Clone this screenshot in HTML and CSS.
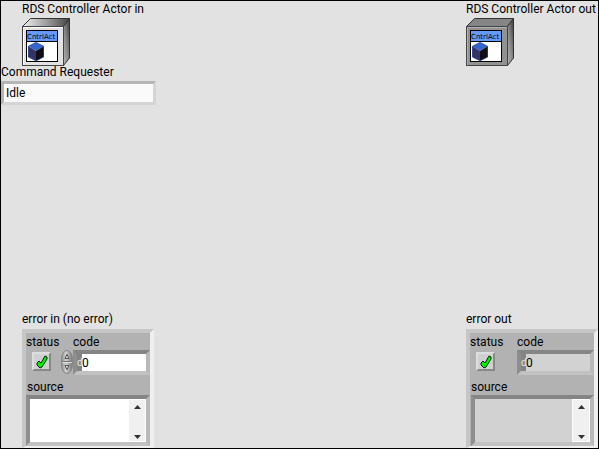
FILE: index.html
```html
<!DOCTYPE html>
<html lang="en">
<head>
<meta charset="utf-8">
<title>RDS Controller Actor</title>
<link rel="stylesheet" href="styles.css">
</head>
<body>
<svg class="defs" aria-hidden="true">
  <defs>
    <linearGradient id="side" x1="1" y1="0" x2="0" y2="1">
      <stop offset="0" stop-color="#383838"/>
      <stop offset="0.5" stop-color="#858585"/>
      <stop offset="1" stop-color="#b8b8b8"/>
    </linearGradient>
    <linearGradient id="top" x1="0" y1="0" x2="1" y2="0">
      <stop offset="0" stop-color="#eeeeee"/>
      <stop offset="0.5" stop-color="#a0a0a0"/>
      <stop offset="1" stop-color="#444444"/>
    </linearGradient>
    <linearGradient id="knob" x1="0" y1="0" x2="1" y2="0">
      <stop offset="0" stop-color="#8c8c8c"/>
      <stop offset="0.4" stop-color="#d2d2d2"/>
      <stop offset="1" stop-color="#777777"/>
    </linearGradient>
    <symbol id="face" viewBox="0 0 32 33">
      <rect x="0.5" y="0.5" width="31" height="31" fill="#fff" stroke="#000"/>
      <rect x="1" y="1" width="30" height="10" fill="#6699ff"/>
      <path d="M1 11.5H31" stroke="#000"/>
      <text x="1" y="9" class="face-text">CntrlAct</text>
      <path d="M2 16L10 12L18 16L10 21Z" fill="#3366cc"/>
      <path d="M2 16L10 21V31L2 27Z" fill="#333366"/>
      <path d="M10 21L18 16V27L10 31Z" fill="#101014"/>
      <path d="M2.5 27V16.5L10 12.5L17.5 16.5V27L10 31Z" fill="none" stroke="#3355aa" stroke-opacity="0.6"/>
    </symbol>
    <symbol id="check" viewBox="0 0 12 14">
      <path d="M1 8L3 6L5 8L9 1L11 2V4L6 12L4 13L1 10Z" fill="#00f000" stroke="#002800"/>
    </symbol>
  </defs>
</svg>
<main class="panel">
  <section class="side">
    <div class="inputs">
      <h2 class="caption indent">RDS Controller Actor in</h2>
      <svg class="actor indent" viewBox="0 0 48 48" role="img" aria-label="CntrlAct">
        <path d="M0.5 8.5L8.5 0.5H47.5L41.5 8.5Z" fill="url(#top)" stroke="#333"/>
        <path d="M41.5 8.5L47.5 0.5V40L41.5 47.5Z" fill="url(#side)" stroke="#333"/>
        <rect x="0.5" y="8.5" width="41" height="39" fill="#e2e2e2" stroke="#444"/>
        <path d="M1.5 47V9.5H41" fill="none" stroke="#fff"/>
        <use href="#face" x="4" y="12" width="32" height="33"/>
      </svg>
      <label class="caption" for="command">Command Requester</label>
      <input class="command" id="command" value="Idle">
    </div>
    <section class="error indent">
      <h2 class="caption">error in (no error)</h2>
      <div class="cluster">
        <div class="row">
          <div class="status">
            <label for="status-in">status</label>
            <span class="led"><input type="checkbox" id="status-in" checked><svg><use href="#check"/></svg></span>
          </div>
          <div class="code">
            <label for="code-in">code</label>
            <div class="number">
              <span class="spinner">
                <svg viewBox="0 0 12 24" aria-hidden="true">
                  <rect x="0.5" y="0.5" width="11" height="23" rx="5.5" ry="9" fill="url(#knob)" stroke="#858585"/>
                  <path d="M1 11.5H11" stroke="#777"/><path d="M1 12.5H11" stroke="#ddd"/>
                  <path d="M4 8.5L6 4.5L8 8.5Z" fill="#ddd" stroke="#555"/>
                  <path d="M4 15.5L6 19.5L8 15.5Z" fill="#ddd" stroke="#555"/>
                </svg>
                <button aria-label="Increase"></button><button aria-label="Decrease"></button>
              </span>
              <span class="frame"><span class="radix">d</span><input id="code-in" value="0"></span>
            </div>
          </div>
        </div>
        <label class="source-label" for="source-in">source</label>
        <div class="frame source">
          <textarea id="source-in"></textarea>
          <div class="scroll">
            <button aria-label="Scroll up"><svg viewBox="0 0 7 4"><path d="M0 4L3.5 0L7 4Z"/></svg></button>
            <button aria-label="Scroll down"><svg viewBox="0 0 7 4"><path d="M0 0L3.5 4L7 0Z"/></svg></button>
          </div>
        </div>
      </div>
    </section>
  </section>
  <section class="side output">
    <div class="inputs">
      <h2 class="caption">RDS Controller Actor out</h2>
      <svg class="actor" viewBox="0 0 48 48" role="img" aria-label="CntrlAct">
        <path d="M0.5 8.5L8.5 0.5H47.5L41.5 8.5Z" fill="#858585" stroke="#333"/>
        <path d="M41.5 8.5L47.5 0.5V40L41.5 47.5Z" fill="url(#side)" stroke="#333"/>
        <rect x="0.5" y="8.5" width="41" height="39" fill="#929292" stroke="#444"/>
        <path d="M1.5 47V9.5H41" fill="none" stroke="#b0b0b0"/>
        <use href="#face" x="4" y="12" width="32" height="33"/>
      </svg>
    </div>
    <section class="error">
      <h2 class="caption">error out</h2>
      <div class="cluster">
        <div class="row">
          <div class="status">
            <label for="status-out">status</label>
            <span class="led"><input type="checkbox" id="status-out" checked disabled><svg><use href="#check"/></svg></span>
          </div>
          <div class="code">
            <label for="code-out">code</label>
            <div class="number">
              <span class="frame"><span class="radix">d</span><input id="code-out" value="0" readonly></span>
            </div>
          </div>
        </div>
        <label class="source-label" for="source-out">source</label>
        <div class="frame source">
          <textarea id="source-out" readonly></textarea>
          <div class="scroll">
            <button aria-label="Scroll up"><svg viewBox="0 0 7 4"><path d="M0 4L3.5 0L7 4Z"/></svg></button>
            <button aria-label="Scroll down"><svg viewBox="0 0 7 4"><path d="M0 0L3.5 4L7 0Z"/></svg></button>
          </div>
        </div>
      </div>
    </section>
  </section>
</main>
</body>
</html>
```
FILE: styles.css
```css
* {
  box-sizing: border-box;
}

body {
  margin: 0;
  background: #e2e2e2;
  color: #000;
  font: 12px/16px Roboto, "Open Sans", sans-serif;
}

input,
textarea,
button {
  margin: 0;
  padding: 0;
  border: 0;
  border-radius: 0;
  color: inherit;
  font: inherit;
}

.defs {
  position: absolute;
  width: 0;
  height: 0;
}

.face-text {
  font: 7px "DejaVu Sans", sans-serif;
}

.panel {
  display: flex;
  justify-content: space-between;
  min-height: 100vh;
  border: 1px solid #000;
}

.side {
  display: flex;
  flex-direction: column;
  justify-content: space-between;
  width: 155px;
}

.output {
  width: 132px;
}

.indent {
  margin-left: 21px;
}

.caption {
  display: block;
  margin-top: 0;
  margin-bottom: 0;
  font-size: 12px;
  font-weight: 400;
  line-height: 16px;
  white-space: nowrap;
}

.actor {
  display: block;
  width: 48px;
  height: 48px;
  margin-top: 1px;
  margin-bottom: -2px;
}

.command {
  display: block;
  width: 100%;
  height: 24px;
  margin-top: 1px;
  padding: 0 2px;
  border: 3px solid;
  border-color: #b5b5b5 #d5d5d5 #d5d5d5 #b5b5b5;
  background: #fafafa;
}

.cluster {
  width: 132px;
  margin-top: 2px;
  padding: 1px 0 0;
  border: 4px solid;
  border-color: #c6c6c6 #efefef #efefef #c6c6c6;
  border-bottom-width: 2px;
  background: #b2b2b2;
}

.row {
  display: flex;
}

.status {
  width: 35px;
}

.status label,
.code label {
  display: block;
}

.led {
  display: block;
  position: relative;
  width: 19px;
  height: 19px;
  margin: 2px 0 0 6px;
}

.led input {
  display: block;
  width: 100%;
  height: 100%;
  appearance: none;
  border: 2px solid;
  border-color: #dedede #888 #888 #dedede;
  background: #d0d0d0;
}

.led svg {
  position: absolute;
  top: 3px;
  left: 4px;
  width: 12px;
  height: 14px;
  pointer-events: none;
}

.code {
  flex: 1;
  min-width: 0;
}

.code label {
  margin-left: 12px;
}

.number {
  display: flex;
  height: 25px;
}

.spinner {
  display: flex;
  flex-direction: column;
  position: relative;
  width: 12px;
  height: 24px;
}

.spinner svg {
  position: absolute;
  inset: 0;
}

.spinner button {
  position: relative;
  flex: 1;
  background: none;
}

.frame {
  display: flex;
  flex: 1;
  min-width: 0;
  border: 4px solid;
  border-color: #858585 #b9b9b9 #c2c2c2 #8e8e8e;
  background: #fff;
}

.radix {
  width: 5px;
  background: #858585;
  color: #e6e6e6;
  font-size: 10px;
  line-height: 17px;
}

.frame input {
  flex: 1;
  min-width: 0;
  background: none;
}

.source-label {
  display: block;
  margin: 4px 0 0 1px;
}

.source {
  height: 51px;
}

.source textarea {
  flex: 1;
  min-width: 0;
  resize: none;
  background: none;
}

.scroll {
  display: flex;
  flex-direction: column;
  justify-content: space-between;
  width: 18px;
  border: 1px solid #fff;
  background: #f0f0f0;
}

.scroll button {
  display: grid;
  place-items: center;
  height: 14px;
  background: none;
}

.scroll button:last-child {
  height: 8px;
}

.scroll svg {
  width: 7px;
  height: 4px;
  fill: #333;
}

.output .frame {
  background: #d2d2d2;
}

.output .code .frame {
  margin-left: 12px;
}

.output .source {
  margin-left: 1px;
}
```
